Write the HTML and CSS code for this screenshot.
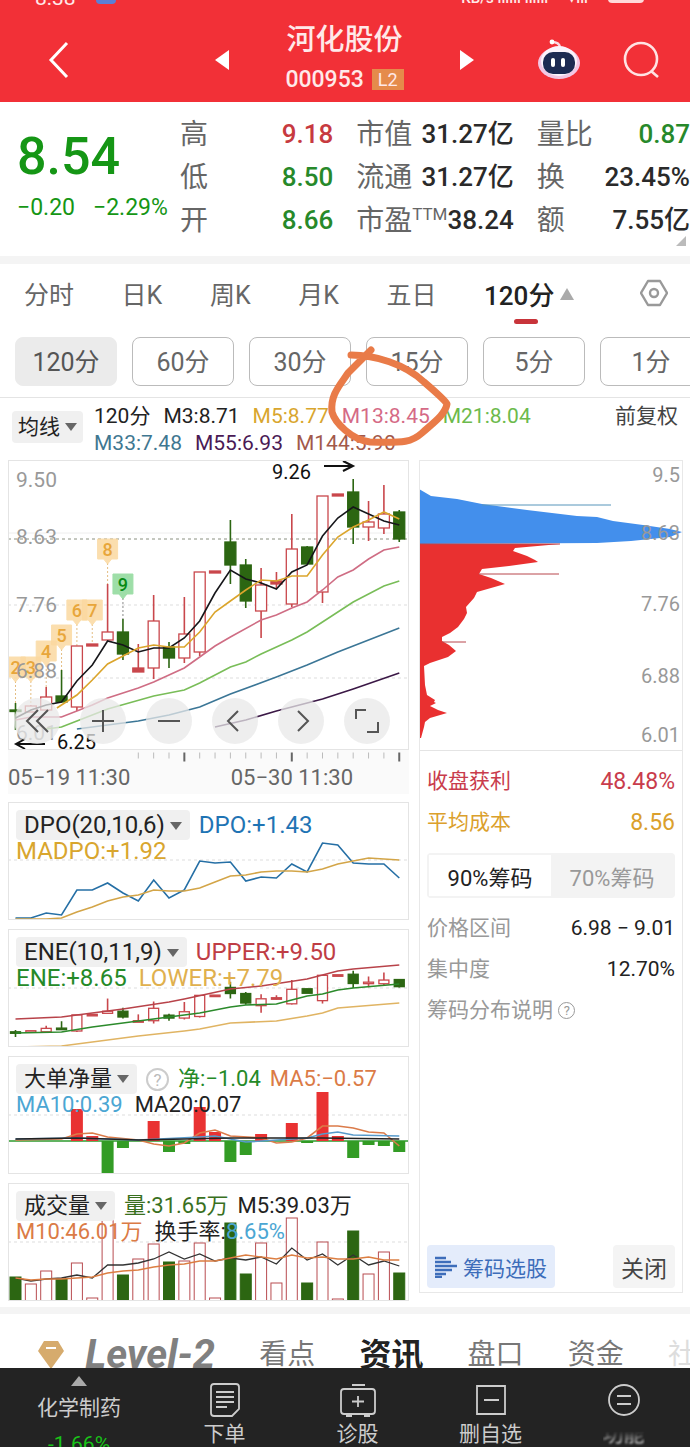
FILE: index.html
```
<!DOCTYPE html>
<html lang="zh-Hans">
<head>
    <meta charset="UTF-8">
    <meta name="viewport" content="width=device-width, initial-scale=1">
    <title>河化股份 000953</title>
    <link rel="stylesheet" href="styles.css">
</head>
<body>
    <header class="top-bar">
        <div class="status-bar">
            <span class="status-time">8:38</span>
            <span class="status-app"></span>
            <span class="status-net">KB/s ıııııı ıııııı</span>
            <span class="status-wifi">▾ııı</span>
            <span class="status-battery"></span>
        </div>
        <button class="icon-btn back" aria-label="返回">
            <svg width="24" height="40" viewBox="0 0 24 40"><path d="M20 3L4 20L20 37" fill="none" stroke="#fff" stroke-width="3"/></svg>
        </button>
        <button class="icon-btn prev" aria-label="上一只">
            <svg width="16" height="22" viewBox="0 0 16 22"><path d="M15 1V21L1 11Z" fill="#fff"/></svg>
        </button>
        <div class="stock-name">
            <h1>河化股份</h1>
            <div class="stock-code">000953 <span class="l2">L2</span></div>
        </div>
        <button class="icon-btn next" aria-label="下一只">
            <svg width="16" height="22" viewBox="0 0 16 22"><path d="M1 1V21L15 11Z" fill="#fff"/></svg>
        </button>
        <button class="icon-btn robot" aria-label="智能助手">
            <svg width="44" height="42" viewBox="0 0 44 42">
                <path d="M23 8Q22 3 15 3" fill="none" stroke="#fbd9e4" stroke-width="2.5"/>
                <circle cx="15" cy="3" r="2.4" fill="#fff"/>
                <ellipse cx="22" cy="24" rx="21" ry="16" fill="#f3c7e4"/>
                <ellipse cx="22" cy="22" rx="18" ry="15" fill="#fbf3fc"/>
                <rect x="6" y="13" width="32" height="22" rx="10" fill="#1d2a52"/>
                <rect x="14" y="19" width="4" height="9" rx="2" fill="#fff"/>
                <rect x="24" y="19" width="4" height="9" rx="2" fill="#fff"/>
            </svg>
        </button>
        <button class="icon-btn search" aria-label="搜索">
            <svg width="38" height="38" viewBox="0 0 38 38" fill="none" stroke="#ffe3e3" stroke-width="2.6"><circle cx="18" cy="18" r="16"/><path d="M28 30L35 36"/></svg>
        </button>
    </header>

    <section class="quote">
        <div class="quote-main">
            <strong>8.54</strong>
            <p><span>−0.20</span><span>−2.29%</span></p>
        </div>
        <dl>
            <div><dt>高</dt><dd class="up">9.18</dd></div>
            <div><dt>低</dt><dd class="down">8.50</dd></div>
            <div><dt>开</dt><dd class="down">8.66</dd></div>
        </dl>
        <dl>
            <div><dt>市值</dt><dd>31.27亿</dd></div>
            <div><dt>流通</dt><dd>31.27亿</dd></div>
            <div><dt>市盈<sup>TTM</sup></dt><dd>38.24</dd></div>
        </dl>
        <dl>
            <div><dt>量比</dt><dd class="down">0.87</dd></div>
            <div><dt>换</dt><dd>23.45%</dd></div>
            <div><dt>额</dt><dd>7.55亿</dd></div>
        </dl>
    </section>

    <nav class="chart-tabs">
        <a href="#">分时</a>
        <a href="#">日K</a>
        <a href="#">周K</a>
        <a href="#">月K</a>
        <a href="#">五日</a>
        <a href="#" class="active">120分</a>
        <button class="icon-btn setting" aria-label="设置">
            <svg width="28" height="28" viewBox="0 0 28 28" fill="none" stroke="#999" stroke-width="2.4"><path d="M8 2H20L27 14L20 26H8L1 14Z" stroke-linejoin="round"/><circle cx="14" cy="14" r="4"/></svg>
        </button>
    </nav>

    <div class="periods">
        <button class="active">120分</button>
        <button>60分</button>
        <button>30分</button>
        <button>15分</button>
        <button>5分</button>
        <button>1分</button>
    </div>

    <section class="ma-bar">
        <button class="drop ma-select">均线</button>
        <div class="ma-values">
            <p><span class="c-dark">120分</span><span class="c-dark">M3:8.71</span><span class="c-gold">M5:8.77</span><span class="c-pink">M13:8.45</span><span class="c-lime">M21:8.04</span></p>
            <p><span class="c-teal">M33:7.48</span><span class="c-purple">M55:6.93</span><span class="c-brown">M144:5.90</span></p>
        </div>
        <button class="adjust">前复权</button>
        <svg class="hand-mark" width="130" height="106" viewBox="325 343 130 106">
            <path d="M351 355C375 355 405 364 424 382C438 394 446 402 447 404C445 415 433 423 422 433C412 442 405 443 370 442C352 440 335 423 332 412C330 395 340 385 348 373L371 350" fill="none" stroke="#e97b48" stroke-width="7" stroke-linecap="round" stroke-linejoin="round"/>
        </svg>
    </section>

    <main class="charts">
        <div class="left">
            <div class="panel k-panel">
                <svg id="kline" viewBox="0 0 401 290"></svg>
                <div class="tools">
                    <button aria-label="最左"><svg viewBox="0 0 46 46"><path d="M24 12L13 23L24 34M34 12L23 23L34 34"/></svg></button>
                    <button aria-label="放大"><svg viewBox="0 0 46 46"><path d="M12 23H34M23 12V34"/></svg></button>
                    <button aria-label="缩小"><svg viewBox="0 0 46 46"><path d="M12 23H34"/></svg></button>
                    <button aria-label="左移"><svg viewBox="0 0 46 46"><path d="M26 13L16 23L26 33"/></svg></button>
                    <button aria-label="右移"><svg viewBox="0 0 46 46"><path d="M20 13L30 23L20 33"/></svg></button>
                    <button aria-label="全屏"><svg viewBox="0 0 46 46"><path d="M12 21V12H22M34 24V34H23"/></svg></button>
                </div>
            </div>
            <div class="axis">
                <svg id="ticks" viewBox="0 0 401 12"></svg>
                <time>05−19 11:30</time><time>05−30 11:30</time>
            </div>
            <div class="panel">
                <svg id="dpo" viewBox="0 0 401 118"></svg>
                <div class="legend latin">
                    <p><button class="drop">DPO(20,10,6)</button><span class="c-blue">DPO:+1.43</span></p>
                    <p><span class="c-gold">MADPO:+1.92</span></p>
                </div>
            </div>
            <div class="panel">
                <svg id="ene" viewBox="0 0 401 118"></svg>
                <div class="legend latin">
                    <p><button class="drop">ENE(10,11,9)</button><span class="c-red">UPPER:+9.50</span></p>
                    <p><span class="c-green">ENE:+8.65</span><span class="c-amber">LOWER:+7.79</span></p>
                </div>
            </div>
            <div class="panel">
                <svg id="flow" viewBox="0 0 401 118"></svg>
                <div class="legend">
                    <p><button class="drop">大单净量</button><i class="help big">?</i><span class="c-green">净:−1.04</span><span class="c-orange">MA5:−0.57</span></p>
                    <p><span class="c-sky">MA10:0.39</span><span class="c-dark">MA20:0.07</span></p>
                </div>
            </div>
            <div class="panel">
                <svg id="volume" viewBox="0 0 401 118"></svg>
                <div class="legend">
                    <p><button class="drop">成交量</button><span class="c-forest">量:31.65万</span><span class="c-dark">M5:39.03万</span></p>
                    <p><span class="c-orange">M10:46.01万</span><span class="c-dark">换手率:<b class="c-sky">8.65%</b></span></p>
                </div>
            </div>
        </div>

        <aside class="chips">
            <svg class="chips-chart" viewBox="0 0 264 290">
                <path d="M0 29L12 36L38 39L63 44L108 50L158 56L178 57L194 61L224 65L251 69L263 72L251 77L212 81L178 83L0 84Z" fill="#438fec"/>
                <path d="M0 84H141L96 88L94 91L108 96L116 100L119 102L90 106L63 109L60 114L72 118L86 124L58 132L55 138L47 147L48 153L45 159L39 167L31 173L23 177V181L30 185L37 191L29 197L11 203L5 206L6 225L8 235L16 240L15 242L17 243L11 246L19 250L28 253L11 258L6 262L5 267L2 278H0Z" fill="#e93030"/>
                <path d="M63 45H192" stroke="#5695ba"/>
                <path d="M60 114H140M23 182H47M0 84H141" stroke="#b8474d"/>
                <g class="axis-label" text-anchor="end">
                    <text x="261" y="22">9.5</text>
                    <text x="261" y="80">8.63</text>
                    <text x="261" y="151">7.76</text>
                    <text x="261" y="223">6.88</text>
                    <text x="261" y="282">6.01</text>
                </g>
            </svg>
            <div class="chips-info">
                <p class="c-crimson"><span>收盘获利</span><b>48.48%</b></p>
                <p class="c-mustard"><span>平均成本</span><b>8.56</b></p>
                <div class="segment"><button class="active">90%筹码</button><button>70%筹码</button></div>
                <p class="small"><span>价格区间</span><b>6.98 − 9.01</b></p>
                <p class="small"><span>集中度</span><b>12.70%</b></p>
                <p class="small"><a href="#">筹码分布说明 <i class="help">?</i></a></p>
            </div>
            <div class="chips-actions">
                <button class="pick"><svg width="22" height="22" viewBox="0 0 22 22"><path d="M0 2H11M0 6H16M0 10H22M0 14H17M0 18H11M0 21H7" stroke="#3d6dba" stroke-width="2.4"/></svg>筹码选股</button>
                <button class="close">关闭</button>
            </div>
        </aside>
    </main>

    <nav class="info-tabs">
        <svg width="28" height="30" viewBox="0 0 28 30"><path d="M7 1H21L27 11L14 29L1 11Z" fill="#d6ab6d"/><path d="M9 8H19" stroke="#fff" stroke-width="2"/></svg>
        <a href="#" class="level2">Level-2</a>
        <a href="#">看点</a>
        <a href="#" class="active">资讯</a>
        <a href="#">盘口</a>
        <a href="#">资金</a>
        <a href="#" class="faded">社</a>
    </nav>

    <nav class="bottom-bar">
        <a href="#" class="sector"><i></i><span>化学制药</span><b>-1.66%</b></a>
        <a href="#">
            <svg width="32" height="36" viewBox="0 0 32 36"><path d="M5 2H27Q30 2 30 5V27L23 34H5Q2 34 2 31V5Q2 2 5 2ZM7 10H25M7 15H25M7 20H25M7 25H18"/></svg>
            <span>下单</span>
        </a>
        <a href="#">
            <svg width="36" height="36" viewBox="0 0 36 36"><path d="M12 3H25M4 7H32Q35 7 35 10V29Q35 32 32 32H4Q1 32 1 29V10Q1 7 4 7ZM18 14V25M12 19.500H24M6 34H12M24 34H30"/></svg>
            <span>诊股</span>
        </a>
        <a href="#">
            <svg width="32" height="36" viewBox="0 0 32 36"><path d="M2 4H30V32H2ZM9 18H24"/></svg>
            <span>删自选</span>
        </a>
        <a href="#" class="blurred">
            <svg width="34" height="36" viewBox="0 0 34 36"><circle cx="17" cy="18" r="15"/><path d="M10 14H24M10 22H24"/></svg>
            <span>功能</span>
        </a>
    </nav>

    <script>
        const STEP = 15.35;
        const px = i => 7.5 + STEP * i;

        // [方向, 最高, 实体上沿, 实体下沿, 最低]  r=空心阳线 R=实心 g=阴线
        const candles = [
            ['g', 243, 250, 251, 270], ['r', 245, 246, 252, 252], ['r', 227, 237, 250, 250], ['g', 210, 236, 242, 242],
            ['r', 186, 186, 247, 251], ['R', 184, 184, 186, 186], ['r', 124, 172, 180, 180], ['g', 159, 172, 194, 200],
            ['R', 184, 208, 212, 212], ['r', 135, 161, 208, 219], ['g', 182, 187, 198, 208], ['r', 137, 174, 198, 203],
            ['r', 112, 112, 192, 196], ['R', 111, 111, 113, 113], ['g', 60, 82, 105, 124], ['g', 99, 105, 141, 148],
            ['r', 108, 125, 151, 178], ['R', 112, 121, 124, 128], ['r', 54, 89, 144, 147], ['g', 86, 87, 104, 104],
            ['r', 36, 36, 132, 143], ['R', 34, 34, 36, 36], ['g', 19, 32, 67, 84], ['r', 41, 62, 67, 81],
            ['r', 25, 54, 68, 74], ['g', 50, 52, 79, 82]
        ];

        // 畫折線 points: [序號, y]
        function line(points, color, width = 1.6) {
            const pts = points.map(p => `${px(p[0]).toFixed(1)},${p[1]}`).join(' ');
            return `<polyline points="${pts}" fill="none" stroke="${color}" stroke-width="${width}"/>`;
        }

        function seq(values, start = 0) {
            return values.map((v, i) => [i + start, v]);
        }

        function drawCandles(fy, w) {
            return candles.map((c, i) => {
                const [type, high, top, bottom, low] = [c[0], ...c.slice(1).map(fy)];
                const x = px(i);
                const color = type === 'g' ? '#2c6612' : '#c9474c';
                const h = Math.max(bottom - top, 1.5);
                return `<path d="M${x} ${high}V${top}M${x} ${bottom}V${low}" stroke="${color}" stroke-width="1.6"/>
                        <rect x="${x - w / 2}" y="${top}" width="${w}" height="${h}" stroke="${color}" stroke-width="1.3" fill="${type === 'r' ? '#fff' : color}"/>`;
            }).join('');
        }

        function dashed(y, color = '#ddd') {
            return `<path d="M0 ${y}H401" stroke="${color}" stroke-dasharray="3 3"/>`;
        }

        // K線主圖
        function drawKline() {
            let html = dashed(79, '#8a9080') + dashed(145) + dashed(218);
            html += '<path d="M0 73H401" stroke="#eee"/>';
            [['2', 0, 209], ['3', 1, 209], ['4', 2, 193], ['5', 3, 177], ['6', 4, 152], ['7', 5, 152], ['8', 6, 91], ['9', 7, 126]].forEach(([n, i, y]) => {
                const green = n === '9';
                const x = px(i);
                html += `<path d="M${x} ${y + 12}V${candles[i][1]}" stroke="${green ? '#888' : '#e4bd83'}" stroke-dasharray="2 2"/>
                         <path d="M${x - 10} ${y - 12}h20v20h-6l-4 5l-4 -5h-6z" fill="${green ? '#8ed99a' : '#fbd9a0'}" stroke="${green ? '#8ed99a' : '#fbd9a0'}" stroke-linejoin="round" opacity=".85"/>
                         <text x="${x}" y="${y + 5}" text-anchor="middle" class="badge" fill="${green ? '#078a14' : '#e8a63a'}">${n}</text>`;
            });
            html += '<g class="axis-label big">' + [['9.50', 27], ['8.63', 84], ['7.76', 152], ['6.88', 218], ['6.01', 280]]
                .map(t => `<text x="8" y="${t[1]}">${t[0]}</text>`).join('') + '</g>';
            html += drawCandles(v => v, 11);
            html += line([[0, 260], [1, 257], [3, 257], [5, 245], [6, 238], [8, 228], [9, 222], [10, 215], [11, 208], [12, 197], [13, 186], [14, 177], [16, 160], [17, 155], [18, 148], [19, 142], [20, 130], [21, 117], [22, 110], [23, 99], [24, 90], [25, 87]], '#cf6d84');
            html += line([[2, 269], [3, 267], [4, 261], [6, 249], [9, 236], [10, 233], [11, 230], [12, 223], [14, 207], [15, 202], [16, 194], [18, 180], [19, 172], [20, 162], [22, 142], [24, 126], [25, 121]], '#79bd58');
            html += line([[4, 269], [6, 265], [8, 261], [10, 255], [12, 247], [14, 234], [17, 217], [19, 205], [21, 192], [22, 186], [25, 168]], '#3b7696');
            html += line([[13, 267], [15, 260], [17, 251], [20, 239], [22, 229], [25, 213]], '#3b1846');
            html += line([[0, 258], [1, 250], [2, 245], [3, 242], [4, 221], [5, 205], [6, 181], [7, 185], [8, 192], [9, 188], [10, 188], [11, 178], [12, 161], [13, 133], [14, 110], [15, 119], [16, 123], [17, 129], [18, 112], [19, 105], [20, 76], [21, 58], [22, 47], [23, 54], [24, 61], [25, 65]], '#16161a');
            html += line([[2.7, 248], [3, 245], [4, 235], [5, 220], [6, 204], [7, 196], [8, 188], [9, 185], [10, 187], [11, 187], [12, 172], [13, 152], [14, 141], [15, 130], [16, 120], [17, 121], [18, 116], [19, 116], [20, 95], [21, 77], [22, 67], [23, 60], [24, 52], [25, 59]], '#dba52c');
            html += '<text x="264" y="19" class="mark">9.26</text><path d="M316 6H345M335 1L345 6L335 11" class="arrow"/>';
            html += '<text x="49" y="289" class="mark">6.25</text><path d="M37 284H8M17 279L8 284L17 289" class="arrow"/>';
            document.getElementById('kline').innerHTML = html;
        }

        function drawTicks() {
            let html = '';
            for (let i = 8; i < 26; i++) {
                const main = i === 11 || i === 18 || i === 25;
                html += `<path d="M${px(i)} 1V${main ? 10 : 7}" stroke="${main ? '#666' : '#bbb'}" stroke-width="${main ? 2 : 1}"/>`;
            }
            document.getElementById('ticks').innerHTML = html;
        }

        function drawDpo() {
            document.getElementById('dpo').innerHTML = dashed(58) +
                line(seq([116, 116, 111, 113, 88, 88, 81, 91, 99, 78, 96, 88, 59, 61, 60, 79, 75, 76, 62, 70, 41, 43, 61, 62, 62, 76]), '#256fa5') +
                line(seq([117, 117, 117, 116, 110, 105, 99, 95, 93, 88, 89, 89, 86, 80, 74, 73, 70, 69, 69, 70, 67, 62, 59, 56, 57, 58]), '#d3a548');
        }

        function drawEne() {
            document.getElementById('ene').innerHTML = dashed(59) + drawCandles(v => 36.8 + v * 0.264, 10) +
                line([[0, 90], [3, 88], [4, 86], [7, 80], [10, 73], [11, 70], [14, 60], [16, 57], [19, 50], [20, 46], [21, 42], [22, 40], [25, 36]], '#b8434a') +
                line([[0, 104], [3, 103], [5, 98], [8, 92], [11, 86], [12, 84], [14, 78], [15, 76], [17, 75], [19, 67], [20, 65], [21, 61], [22, 59], [25, 55]], '#2b8a2b') +
                line([[0, 118], [3, 117], [5, 113], [8, 107], [11, 102], [12, 100], [14, 94], [17, 92], [19, 87], [20, 84], [21, 79], [25, 74]], '#e0b463');
        }

        // 大單淨量: 正值為紅柱, 負值為綠柱
        function drawFlow() {
            const flow = [0, 0, 0, 0, 32, 5, -33, -7, 0, 20, -11, -3, 34, 9, -21, -14, 7, 0, 18, -2, 49, 5, -17, -4, -5, -11];
            let html = dashed(59) + '<path d="M0 85H401" stroke="#2c9a2c" stroke-width="1.5"/>';
            flow.forEach((v, i) => {
                if (v) html += `<rect x="${px(i) - 6}" y="${v > 0 ? 85 - v : 85}" width="12" height="${Math.abs(v)}" fill="${v > 0 ? '#e93232' : '#339c25'}"/>`;
            });
            html += line([[0, 84], [3, 83], [4, 78], [5, 77], [6, 81], [8, 84], [9, 88], [10, 90], [11, 87], [12, 77], [13, 74], [14, 80], [16, 82], [17, 87], [18, 86], [19, 82], [20, 70], [21, 70], [22, 72], [23, 76], [24, 77], [25, 90]], '#db7b4a');
            html += line([[0, 83], [4, 82], [8, 84], [12, 81], [13, 80], [15, 86], [19, 82], [20, 78], [21, 76], [22, 79], [25, 80]], '#579acb');
            html += line([[0, 83], [4, 82], [8, 84], [14, 82], [20, 82], [25, 83]], '#222');
            document.getElementById('flow').innerHTML = html;
        }

        function drawVolume() {
            const tops = [94, 101, 88, 96, 80, 115, 36, 92, 76, 61, 79, 78, 60, 115, 40, 91, 60, 100, 35, 100, 59, 116, 48, 91, 69, 90];
            const greens = [0, 3, 7, 10, 14, 15, 19, 22, 25];
            let html = dashed(59);
            tops.forEach((y, i) => {
                const color = greens.includes(i) ? '#2c6612' : '#b84c50';
                html += `<rect x="${px(i) - 5.5}" y="${y}" width="11" height="${118 - y}" stroke="${color}" fill="${greens.includes(i) ? color : '#fff'}"/>`;
            });
            html += line(seq([95, 98, 96, 95, 92, 95, 82, 82, 80, 76, 69, 76, 71, 78, 75, 77, 74, 81, 65, 77, 71, 82, 72, 82, 78, 83]), '#333', 1.3);
            html += line(seq([95, 97, 96, 96, 95, 94, 90, 88, 87, 84, 82, 81, 78, 78, 75, 72, 74, 76, 72, 75, 74, 76, 76, 74, 77, 77]), '#dc7e42', 1.3);
            document.getElementById('volume').innerHTML = html;
        }

        drawKline();
        drawTicks();
        drawDpo();
        drawEne();
        drawFlow();
        drawVolume();
    </script>
</body>
</html>
```

FILE: styles.css
```
* {
    box-sizing: border-box;
}

body {
    margin: 0;
    background: #fff;
    color: #222;
    font-family: Roboto, 'Noto Sans CJK SC', sans-serif;
    overflow-x: hidden;
}

h1, p, dl, dd {
    margin: 0;
    font-weight: 400;
}

i, b {
    font-style: normal;
    font-weight: inherit;
}

a {
    color: inherit;
    text-decoration: none;
}

button {
    padding: 0;
    border: none;
    background: none;
    color: inherit;
    font: inherit;
    white-space: nowrap;
    cursor: pointer;
}

svg {
    display: block;
}

/* 頂部標題欄 */
.top-bar {
    position: relative;
    display: grid;
    grid-template-columns: 118px 112px 1fr 65px 70px 96px;
    align-items: center;
    height: 102px;
    padding-top: 17px;
    background: #f23037;
    color: #ffe9e9;
}

.icon-btn {
    display: flex;
    justify-content: center;
    align-items: center;
}

.prev {
    justify-content: flex-end;
}

.next {
    justify-content: flex-start;
}

.stock-name {
    text-align: center;
}

.stock-name h1 {
    font-size: 29px;
    font-weight: 500;
    line-height: 40px;
}

.stock-code {
    display: flex;
    justify-content: center;
    align-items: center;
    gap: 8px;
    font-size: 23px;
    font-weight: 500;
    line-height: 40px;
}

.l2 {
    padding: 0 6px;
    background: #e58b4b;
    font-size: 18px;
    font-weight: 400;
    line-height: 21px;
}

.status-bar {
    position: absolute;
    top: 0;
    left: 0;
    display: flex;
    align-items: flex-end;
    width: 100%;
    height: 6px;
    padding: 0 46px 0 35px;
    overflow: hidden;
    font-size: 21px;
    line-height: 15px;
}

.status-app {
    width: 20px;
    height: 4px;
    margin: 0 auto 2px 20px;
    border-radius: 0 0 4px 4px;
    background: #5b7fd6;
}

.status-net, .status-wifi {
    margin-right: 20px;
    font-size: 15px;
    font-weight: 500;
}

.status-battery {
    width: 36px;
    height: 4px;
    margin-bottom: 3px;
    border-radius: 0 0 4px 4px;
    background: #ffd9d9;
}

/* 行情 */
.quote {
    position: relative;
    display: grid;
    grid-template-columns: 140px 1fr 1fr 1fr;
    gap: 23px;
    padding: 11px 0 14px 17px;
    border-bottom: 8px solid #f4f4f4;
}

.quote::after {
    content: '';
    position: absolute;
    right: 4px;
    bottom: 10px;
    border-left: 10px solid transparent;
    border-bottom: 10px solid #bbb;
}

.quote-main {
    color: #159615;
    white-space: nowrap;
}

.quote-main strong {
    display: block;
    padding-top: 12px;
    font-size: 52px;
    font-weight: 500;
    line-height: 64px;
}

.quote-main p {
    display: flex;
    gap: 18px;
    font-size: 23px;
    line-height: 38px;
}

.quote dl div {
    display: flex;
    justify-content: space-between;
    font-size: 28px;
    line-height: 43px;
    white-space: nowrap;
}

.quote dt {
    color: #666;
}

.quote sup {
    font-size: 17px;
    line-height: 0;
}

.quote dd {
    color: #2a2a2a;
    font-size: 26px;
    font-weight: 500;
}

.quote .up {
    color: #c73a40;
}

.quote .down {
    color: #27892a;
}

/* 週期 */
.chart-tabs {
    display: flex;
    justify-content: space-between;
    align-items: center;
    height: 62px;
    padding: 0 22px 4px 24px;
    color: #666;
    font-size: 25px;
}

.chart-tabs .active {
    position: relative;
    padding-right: 20px;
    color: #222;
    font-size: 26px;
    font-weight: 500;
}

.chart-tabs .active::before {
    content: '';
    position: absolute;
    right: 0;
    top: 13px;
    border: 7px solid transparent;
    border-top: none;
    border-bottom: 12px solid #aaa;
}

.chart-tabs .active::after {
    content: '';
    position: absolute;
    left: 30px;
    bottom: -12px;
    width: 24px;
    height: 5px;
    border-radius: 3px;
    background: #c8343a;
}

.setting {
    margin-left: 18px;
}

.periods {
    display: flex;
    gap: 15px;
    padding: 11px 0 11px 15px;
    overflow: hidden;
    border-bottom: 1px solid #e4e4e4;
}

.periods button {
    flex: 0 0 102px;
    height: 49px;
    padding-bottom: 3px;
    border: 1px solid #bbb;
    border-radius: 8px;
    color: #666;
    font-size: 25px;
}

.periods .active {
    border-color: #ebebeb;
    background: #ebebeb;
    color: #555;
}

/* 均線 */
.ma-bar {
    position: relative;
    display: flex;
    align-items: flex-start;
    height: 62px;
    padding: 5px 12px 0;
}

.drop {
    padding: 0 8px;
    border-radius: 4px;
    background: #f0f0f0;
    color: #222;
    line-height: 30px;
}

.drop::after {
    content: '';
    display: inline-block;
    margin-left: 5px;
    border: 6px solid transparent;
    border-top: 8px solid #666;
    border-bottom: none;
    vertical-align: 3px;
}

.ma-select {
    margin-top: 8px;
    padding: 0 6px;
    font-size: 21px;
    line-height: 32px;
}

.ma-values {
    flex: 1;
    margin-left: 11px;
    font-size: 21px;
    line-height: 27px;
    white-space: nowrap;
}

.ma-values p {
    display: flex;
    gap: 13px;
}

.adjust {
    color: #444;
    font-size: 21px;
    line-height: 27px;
}

.hand-mark {
    position: absolute;
    left: 325px;
    top: -55px;
    pointer-events: none;
}

/* 圖表 */
.charts {
    display: grid;
    grid-template-columns: 401fr 264fr;
    gap: 10px;
    padding: 0 7px 6px 8px;
    border-bottom: 7px solid #f4f4f4;
}

.left {
    display: flex;
    flex-direction: column;
    gap: 9px;
}

.panel {
    position: relative;
    outline: 1px solid #e4e4e4;
    outline-offset: -1px;
}

.panel > svg, .axis svg, .chips-chart {
    width: 100%;
}

.axis-label {
    fill: #999;
    font-size: 20px;
}

.axis-label.big {
    font-size: 21px;
}

.badge {
    font-size: 18px;
    font-weight: 500;
}

.mark {
    fill: #111;
    font-size: 20px;
}

.arrow {
    fill: none;
    stroke: #111;
    stroke-width: 2;
}

.tools {
    position: absolute;
    left: 6px;
    bottom: 6px;
    display: flex;
    gap: 20px;
}

.tools button {
    width: 46px;
    height: 46px;
    border-radius: 50%;
    background: rgba(232, 232, 232, 0.75);
}

.tools path {
    fill: none;
    stroke: #555;
    stroke-width: 2;
}

.axis {
    display: flex;
    flex-wrap: wrap;
    justify-content: space-between;
    height: 44px;
    margin: -9px 0 -1px;
    padding-right: 56px;
    background: #fafafa;
    color: #666;
    font-size: 22px;
    line-height: 26px;
}

.axis svg {
    flex: none;
    width: calc(100% + 56px);
    margin-right: -56px;
}

.legend {
    position: absolute;
    top: 8px;
    left: 8px;
    font-size: 22px;
    line-height: 30px;
    white-space: nowrap;
}

.legend p {
    display: flex;
    align-items: center;
    gap: 9px;
}

.legend p + p {
    gap: 12px;
    line-height: 22px;
}

.latin {
    font-size: 24px;
}

.help {
    display: inline-block;
    width: 17px;
    height: 17px;
    border: 1px solid #999;
    border-radius: 50%;
    color: #999;
    font-size: 13px;
    line-height: 15px;
    text-align: center;
    vertical-align: 2px;
}

.help.big {
    width: 23px;
    height: 23px;
    border: 2px solid #ccc;
    color: #bbb;
    font-size: 17px;
    line-height: 20px;
}

/* 籌碼 */
.chips {
    display: flex;
    flex-direction: column;
    margin-bottom: 8px;
    border-bottom: 1px solid #e4e4e4;
    outline: 1px solid #e8e8e8;
    outline-offset: -1px;
}

.chips-chart {
    border-bottom: 1px solid #e4e4e4;
}

.chips-info {
    flex: 1;
    padding: 10px 8px;
}

.chips-info p {
    display: flex;
    justify-content: space-between;
    align-items: center;
    font-size: 21px;
    line-height: 41px;
}

.chips-info b {
    font-size: 23px;
}

.chips-info .small {
    color: #999;
}

.small b {
    color: #222;
    font-size: 21px;
}

.segment {
    display: grid;
    grid-template-columns: 1fr 1fr;
    height: 45px;
    margin: 10px 0;
    padding: 2px;
    border-radius: 4px;
    background: #f3f3f3;
    color: #999;
    font-size: 22px;
}

.segment .active {
    background: #fff;
    color: #222;
}

.chips-actions {
    display: flex;
    justify-content: space-between;
    padding: 4px 8px;
}

.chips-actions button {
    display: flex;
    align-items: center;
    gap: 6px;
    height: 43px;
    padding: 0 8px;
    border-radius: 4px;
    font-size: 21px;
}

.pick {
    background: #e4ecfb;
    color: #3d6dba;
}

.chips-actions .close {
    background: #f4f4f4;
    color: #444;
    font-size: 23px;
}

/* 資訊分頁 */
.info-tabs {
    display: flex;
    justify-content: space-between;
    align-items: center;
    height: 54px;
    padding: 28px 0 0 37px;
    overflow: hidden;
    color: #777;
    font-size: 28px;
    line-height: 32px;
    white-space: nowrap;
}

.info-tabs .level2 {
    margin-left: -24px;
    color: #808080;
    font-size: 40px;
    font-style: italic;
    font-weight: 700;
}

.info-tabs .active {
    color: #222;
    font-size: 32px;
    font-weight: 700;
}

.info-tabs .faded {
    width: 22px;
    overflow: hidden;
    color: #ddd;
}

/* 底部導航 */
.bottom-bar {
    display: grid;
    grid-template-columns: 158px repeat(4, 1fr);
    height: 79px;
    overflow: hidden;
    background: #232323;
    color: #ccc;
    font-size: 21px;
    line-height: 28px;
}

.bottom-bar a {
    display: flex;
    flex-direction: column;
    align-items: center;
    gap: 2px;
    padding-top: 14px;
}

.bottom-bar path, .bottom-bar circle {
    fill: none;
    stroke: #ccc;
    stroke-width: 1.8;
}

.bottom-bar .sector {
    gap: 8px;
    padding-top: 8px;
}

.sector i {
    border: 8px solid transparent;
    border-top: none;
    border-bottom: 10px solid #aaa;
}

.sector b {
    color: #19c219;
}

.blurred span {
    filter: blur(1px);
    -webkit-mask: linear-gradient(transparent 40%, #000 80%);
    mask: linear-gradient(transparent 40%, #000 80%);
}

/* 文字顏色 */
.c-dark { color: #222; }
.c-gold { color: #d9a62e; }
.c-amber { color: #e0b04e; }
.c-mustard { color: #dba02c; }
.c-pink { color: #d56a86; }
.c-lime { color: #6cba4c; }
.c-teal { color: #3f7791; }
.c-purple { color: #4a1a55; }
.c-brown { color: #a2594b; }
.c-blue { color: #1f74b4; }
.c-red { color: #bf3d45; }
.c-crimson { color: #c93c4c; }
.c-green { color: #258a28; }
.c-forest { color: #39701e; }
.c-orange { color: #db7b46; }
.c-sky { color: #4ba6d3; }
```
